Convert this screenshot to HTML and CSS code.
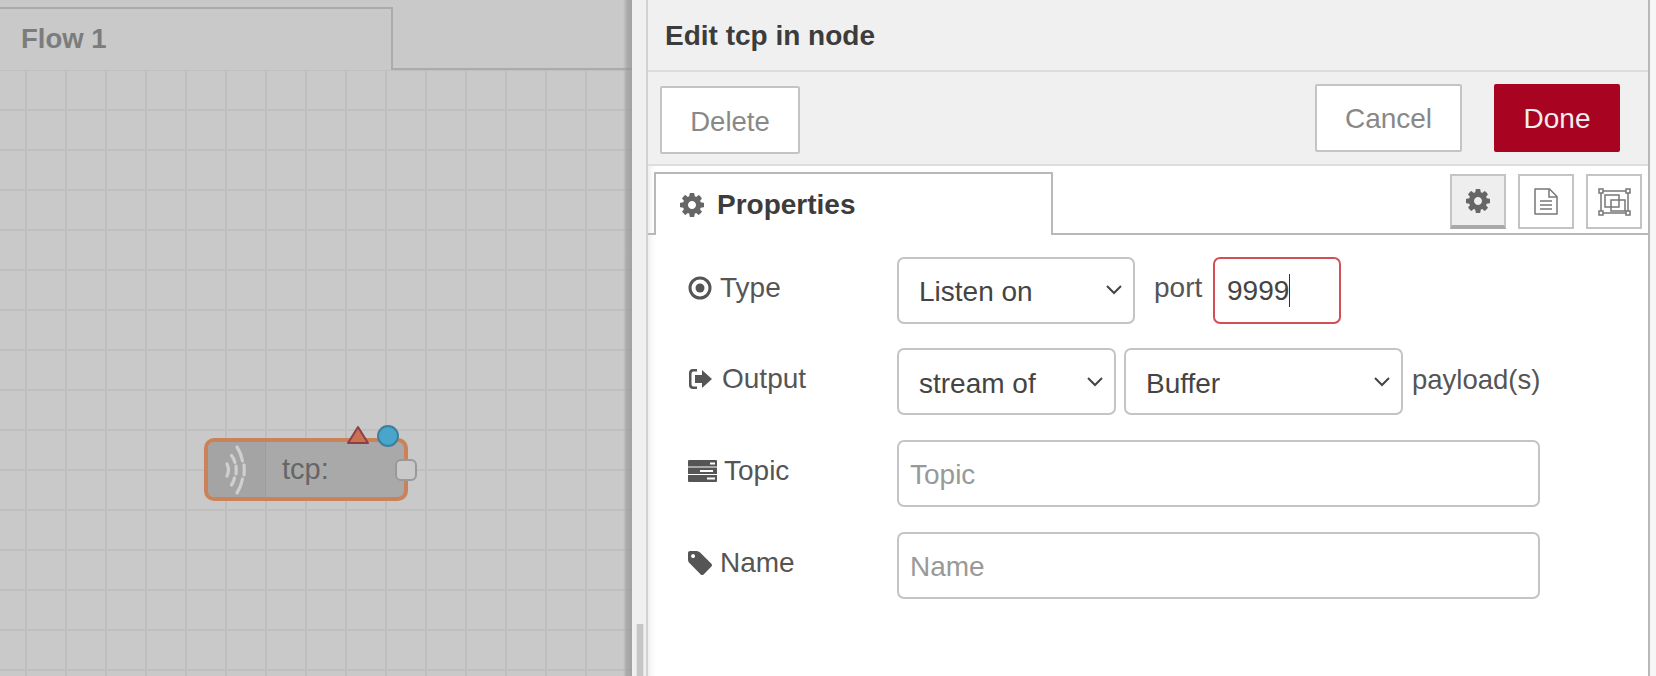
FILE: index.html
```html
<!DOCTYPE html>
<html>
<head>
<meta charset="utf-8" />
<title>Edit tcp in node</title>
<link rel="stylesheet" href="styles.css">
</head>

<body>
<div class="canvas">
  <div class="flow-tabs">
    <div class="flow-tab">Flow 1</div>
    <div class="flow-tabs-rest"></div>
  </div>
  <div class="workspace">
    <div class="node">
      <div class="node-icon">
        <svg width="57" height="55" viewBox="0 0 57 55" fill="none" stroke="#cfcfcf" stroke-width="3.200" stroke-linecap="round">
          <path d="M19 22q3 6 0 12" />
          <path d="M23.500 13.500q2.500 3 3.500 7M28 24q.5 4 0 8M26.500 36q-1 4-3 7" />
          <path d="M29 5q4 6 5.500 14M36 23q.5 5 0 10M34.500 37q-1.500 8-5.500 14" />
        </svg>
      </div>
      <div class="node-label">tcp:</div>
      <svg class="node-changed" width="24" height="20" viewBox="0 0 24 20"><path d="M12 2L22 18H2Z" fill="#cb7050" stroke="#8d3f47" stroke-width="2" stroke-linejoin="round" /></svg>
      <div class="node-dot"></div>
      <div class="node-port"></div>
    </div>
  </div>
</div>

<div class="handle"><div class="handle-thumb"></div></div>

<div class="tray">
  <div class="tray-title">Edit tcp in node</div>
  <div class="tray-toolbar">
    <button class="btn btn-delete">Delete</button>
    <button class="btn btn-cancel">Cancel</button>
    <button class="btn btn-done">Done</button>
  </div>
  <div class="tray-tabs">
    <div class="tab">
      <svg class="icon-gear" width="24" height="24" viewBox="0 0 1536 1536"><path fill="#666" d="M1024 768q0-106-75-181t-181-75-181 75-75 181 75 181 181 75 181-75 75-181zm512-109v222q0 12-8 23t-20 13l-185 28q-19 54-39 91 35 50 107 138 10 12 10 25t-9 23q-27 37-99 108t-94 71q-12 0-26-9l-138-108q-44 23-91 38-16 136-29 186-7 28-36 28h-222q-14 0-24.500-8.500t-11.500-21.500l-28-184q-49-16-90-37l-141 107q-10 9-25 9-14 0-25-11-126-114-165-168-7-10-7-23 0-12 8-23 15-21 51-66.500t54-70.500q-27-50-41-99l-183-27q-13-2-21-12.500t-8-23.500v-222q0-12 8-23t19-13l186-28q14-46 39-92-40-57-107-138-10-12-10-24 0-10 9-23 26-36 98.500-107.500t94.500-71.500q13 0 26 10l138 107q44-23 91-38 16-136 29-186 7-28 36-28h222q14 0 24.500 8.500t11.500 21.500l28 184q49 16 90 37l142-107q9-9 24-9 13 0 25 10 129 119 165 170 7 8 7 22 0 12-8 23-15 21-51 66.500t-54 70.500q26 50 41 98l183 28q13 2 21 12.500t8 23.500z"/></svg>
      <span>Properties</span>
    </div>
    <div class="tab-buttons">
      <div class="tab-btn tab-btn-on">
        <svg width="24" height="24" viewBox="0 0 1536 1536"><path fill="#666" d="M1024 768q0-106-75-181t-181-75-181 75-75 181 75 181 181 75 181-75 75-181zm512-109v222q0 12-8 23t-20 13l-185 28q-19 54-39 91 35 50 107 138 10 12 10 25t-9 23q-27 37-99 108t-94 71q-12 0-26-9l-138-108q-44 23-91 38-16 136-29 186-7 28-36 28h-222q-14 0-24.500-8.500t-11.500-21.500l-28-184q-49-16-90-37l-141 107q-10 9-25 9-14 0-25-11-126-114-165-168-7-10-7-23 0-12 8-23 15-21 51-66.500t54-70.500q-27-50-41-99l-183-27q-13-2-21-12.500t-8-23.500v-222q0-12 8-23t19-13l186-28q14-46 39-92-40-57-107-138-10-12-10-24 0-10 9-23 26-36 98.500-107.500t94.500-71.500q13 0 26 10l138 107q44-23 91-38 16-136 29-186 7-28 36-28h222q14 0 24.500 8.500t11.500 21.500l28 184q49 16 90 37l142-107q9-9 24-9 13 0 25 10 129 119 165 170 7 8 7 22 0 12-8 23-15 21-51 66.500t-54 70.500q26 50 41 98l183 28q13 2 21 12.500t8 23.500z"/></svg>
      </div>
      <div class="tab-btn">
        <svg width="24" height="27" viewBox="0 0 24 27" fill="none" stroke="#777" stroke-width="1.500">
          <path d="M1 1H15.500L23 8.500V26H1Z" stroke-linejoin="round" />
          <path d="M15 1V9H23" />
          <path d="M6 13H18M6 17H18M6 21H18" />
        </svg>
      </div>
      <div class="tab-btn">
        <svg width="33" height="28" viewBox="0 0 33 28" fill="none" stroke="#777" stroke-width="1.500">
          <path d="M3 3H30V25H3Z" />
          <path d="M7 7H21V19H7ZM13 12H27V23H13Z" />
          <path fill="#fff" d="M1 1H5V5H1ZM28 1H32V5H28ZM1 23H5V27H1ZM28 23H32V27H28Z" />
        </svg>
      </div>
    </div>
  </div>

  <div class="form">
    <div class="form-row">
      <label class="form-label">
        <svg width="24" height="24" viewBox="0 0 24 24" fill="none"><circle cx="12" cy="12" r="10" stroke="#555" stroke-width="3" /><circle cx="12" cy="12" r="4.500" fill="#555" /></svg>
        <span>Type</span>
      </label>
      <select class="select select-type"><option>Listen on</option></select>
      <span class="form-text port-text">port</span>
      <div class="port-input">9999<span class="caret"></span></div>
    </div>
    <div class="form-row">
      <label class="form-label">
        <svg width="24" height="20" viewBox="0 0 24 20"><path fill="#555" d="M9 2.500V0H5Q1 0 1 4V16Q1 20 5 20H9V17.500H5.500Q3.500 17.500 3.500 15.500V4.500Q3.500 2.500 5.500 2.500ZM14 1L24 10L14 19V14H7V6H14Z" /></svg>
        <span class="label-output">Output</span>
      </label>
      <select class="select select-stream"><option>stream of</option></select>
      <select class="select select-buffer"><option>Buffer</option></select>
      <span class="form-text payload-text">payload(s)</span>
    </div>
    <div class="form-row">
      <label class="form-label">
        <svg width="29" height="22" viewBox="0 0 29 22">
          <path fill="#555" fill-rule="evenodd" d="M1 0H28Q29 0 29 1V6.500H0V1Q0 0 1 0ZM22 2.500V4.500H27V2.500ZM0 7.500H29V14H0ZM12 10V12H25V10ZM0 15H29V21Q29 22 28 22H1Q0 22 0 21ZM19 17.500V19.500H27V17.500Z" />
        </svg>
        <span class="label-topic">Topic</span>
      </label>
      <input class="text-input" type="text" placeholder="Topic">
    </div>
    <div class="form-row">
      <label class="form-label">
        <svg width="24" height="24" viewBox="0 0 1515 1515"><path fill="#555" d="M448 320q0-53-37.500-90.500t-90.500-37.500-90.500 37.500-37.500 90.500 37.500 90.500 90.500 37.500 90.500-37.500 37.500-90.500zm1067 576q0 53-37 90l-491 492q-39 37-91 37-53 0-90-37l-715-716q-38-37-64.500-101t-26.500-117v-416q0-52 38-90t90-38h416q53 0 117 26.500t102 64.500l715 714q37 39 37 91z"/></svg>
        <span>Name</span>
      </label>
      <input class="text-input" type="text" placeholder="Name">
    </div>
  </div>
</div>
<div class="tray-edge"></div>
</body>
</html>
```

FILE: styles.css
```css
html,body{margin:0;padding:0;height:100%;}
body{display:flex;width:1656px;height:676px;overflow:hidden;background:#fff;font:28px 'Liberation Sans',Arial,sans-serif;color:#555;}

/* left side, greyed out behind the tray */
.canvas{width:632px;flex:none;display:flex;flex-direction:column;position:relative;background:#c9c9c9;}
.canvas:after{content:'';position:absolute;top:0;right:0;bottom:0;width:9px;background:linear-gradient(to right,rgba(150,150,150,0),rgba(150,150,150,.6) 50%,rgba(150,150,150,.75));}
.flow-tabs{display:flex;height:70px;flex:none;}
.flow-tab{width:370px;height:61px;margin-top:7px;border-top:2px solid #ababab;border-right:2px solid #ababab;padding-left:21px;font-weight:bold;font-size:27.5px;line-height:59px;color:#7c7c7c;}
.flow-tabs-rest{flex:1;border-bottom:2px solid #ababab;}
.workspace{flex:1;position:relative;background-color:#c9c9c9;background-image:linear-gradient(to right,#bfbfbf 2px,transparent 2px),linear-gradient(to bottom,#bfbfbf 2px,transparent 2px);background-size:40px 40px;background-position:25px -1px;}

.node{position:absolute;left:204px;top:368px;width:204px;height:63px;box-sizing:border-box;border:4px solid #cc8259;border-radius:10px;background:#a9a9a9;display:flex;}
.node-icon{width:57px;flex:none;background:#a4a4a4;border-right:1px solid #9d9d9d;border-radius:6px 0 0 6px;}
.node-icon svg{display:block;}
.node-label{padding-left:16px;font-size:29px;line-height:55px;color:#666;}
.node-changed{position:absolute;left:138px;top:-17px;}
.node-dot{position:absolute;left:169px;top:-17px;width:18px;height:18px;border:2px solid #3f7f9c;border-radius:50%;background:#48a5cc;}
.node-port{position:absolute;left:187px;top:17px;width:18px;height:18px;border:2px solid #999;border-radius:6px;background:#c9c9c9;}

/* strip between canvas and tray */
.handle{width:14px;flex:none;position:relative;background:#f0f0f0;border-right:2px solid #d2d2d2;}
.handle-thumb{position:absolute;left:4px;top:624px;bottom:0;width:6px;background:#c6c6c6;border:solid #e2e2e2;border-width:0 1px;}

.tray{width:1000px;flex:none;display:flex;flex-direction:column;background:#fff;border-right:2px solid #b8b8b8;box-shadow:inset 8px 0 8px -8px #ddd;}
.tray-edge{flex:1;background:#f6f6f6;}
.tray-title{height:70px;flex:none;padding-left:17px;background:#f0f0f0;border-bottom:2px solid #ddd;font-weight:bold;line-height:72px;color:#3c3c3c;}
.tray-toolbar{height:94px;flex:none;display:flex;align-items:flex-start;padding:12px 28px 0 12px;box-sizing:border-box;background:#f0f0f0;border-bottom:2px solid #ddd;}
.btn{height:68px;box-sizing:border-box;border:2px solid #c4c4c4;border-radius:2px;background:#fff;font:28px 'Liberation Sans',Arial,sans-serif;color:#888;padding:2px 0 0;}
.btn-delete{width:140px;margin-top:2px;padding-top:4px;font-size:27.5px;}
.btn-cancel{width:147px;margin-left:auto;}
.btn-done{width:126px;margin-left:32px;border-color:#a80321;background:#a80321;color:#eee;}

.tray-tabs{height:69px;flex:none;box-sizing:border-box;display:flex;padding:6px 6px 0 6px;border-bottom:2px solid #b8b8b8;}
.tab{width:399px;height:63px;box-sizing:border-box;border:2px solid #b8b8b8;border-bottom:none;background:#fff;display:flex;align-items:center;padding-left:24px;gap:13px;font-weight:bold;color:#3c3c3c;}
.tab-buttons{margin-left:auto;margin-top:2px;display:flex;gap:12px;}
.tab-btn{width:56px;height:55px;box-sizing:border-box;border:2px solid #c4c4c4;display:flex;align-items:center;justify-content:center;}
.tab-btn-on{background:#eee;border-bottom:4px solid #a9a9a9;}

.form{display:flex;flex-direction:column;gap:24.7px;padding:21.7px 0 0 40px;}
.form-row{display:flex;height:67px;align-items:center;}
.form-label{width:209px;flex:none;display:flex;align-items:center;gap:8px;margin-bottom:5px;color:#555;}
.label-output{margin-left:2px;}
.label-topic{margin-left:-1px;}
.select{height:67px;box-sizing:border-box;border:2px solid #c4c4c4;border-radius:7px;padding:3px 0 0 20px;background:#fff url("data:image/svg+xml,%3Csvg xmlns='http://www.w3.org/2000/svg' width='16' height='10'%3E%3Cpath d='M1 1l7 7 7-7' fill='none' stroke='%23444' stroke-width='2'/%3E%3C/svg%3E") no-repeat right 11px center;appearance:none;-webkit-appearance:none;font:28px 'Liberation Sans',Arial,sans-serif;color:#444;outline:none;}
.select-type{width:238px;}
.select-stream{width:219px;}
.select-buffer{width:279px;margin-left:8px;}
.form-text{color:#555;margin-bottom:4px;}
.port-text{margin-left:19px;width:59px;}
.payload-text{margin-left:9px;font-size:27.5px;}
.port-input{width:128px;height:67px;box-sizing:border-box;border:2px solid #d34f55;border-radius:7px;padding-left:12px;line-height:63px;color:#444;display:flex;align-items:center;}
.caret{display:inline-block;width:1px;height:33px;background:#333;}
.text-input{width:643px;height:67px;box-sizing:border-box;border:2px solid #c4c4c4;border-radius:7px;padding:3px 0 0 11px;font:28px 'Liberation Sans',Arial,sans-serif;color:#444;outline:none;}
.text-input::placeholder{color:#999;opacity:1;}
```
